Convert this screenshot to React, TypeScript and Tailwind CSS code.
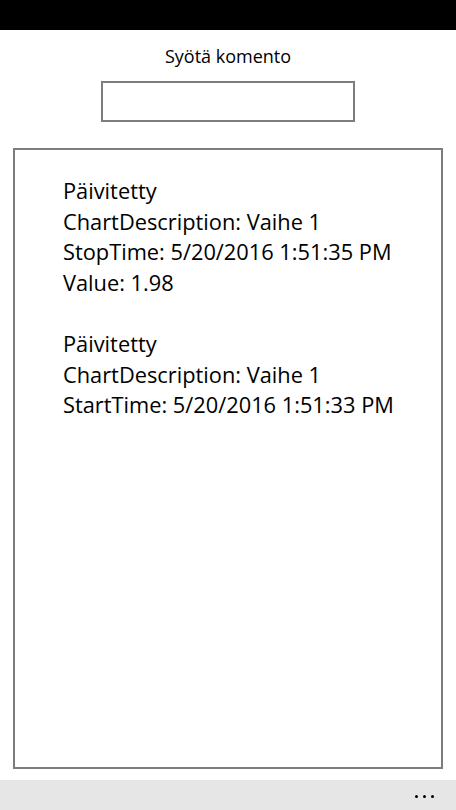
const lines1 = [
  "Päivitetty",
  "ChartDescription: Vaihe 1",
  "StopTime: 5/20/2016 1:51:35 PM",
  "Value: 1.98",
];
const lines2 = [
  "Päivitetty",
  "ChartDescription: Vaihe 1",
  "StartTime: 5/20/2016 1:51:33 PM",
];

export default function App() {
  return (
    <div className="w-[456px] h-[810px] flex flex-col bg-white text-black font-['Open_Sans','Noto_Sans',sans-serif]">
      {/* status bar */}
      <div className="h-[30px] bg-black shrink-0" />

      {/* title */}
      <div className="mt-[14px] text-center text-[18px] leading-[24px]">Syötä komento</div>

      {/* command input */}
      <div className="mt-[13px] mx-auto w-[254px] h-[41px] border-2 border-[#7d7d7d]" />

      {/* log */}
      <div className="mt-[26px] mx-[13px] h-[621px] border-2 border-[#7d7d7d] pt-[26px] pl-[48px] text-[21.8px] leading-[30.5px]">
        {lines1.map((l, i) => (
          <div key={i}>{l}</div>
        ))}
        <div className="h-[31px]" />
        {lines2.map((l, i) => (
          <div key={i}>{l}</div>
        ))}
      </div>

      <div className="flex-1" />

      {/* app bar */}
      <div className="h-[30px] bg-[#e6e6e6] flex items-center justify-end pr-[22px] shrink-0">
        <div className="flex gap-[5px] mt-[2px]">
          <span className="w-[3px] h-[3px] rounded-full bg-black" />
          <span className="w-[3px] h-[3px] rounded-full bg-black" />
          <span className="w-[3px] h-[3px] rounded-full bg-black" />
        </div>
      </div>
    </div>
  );
}
